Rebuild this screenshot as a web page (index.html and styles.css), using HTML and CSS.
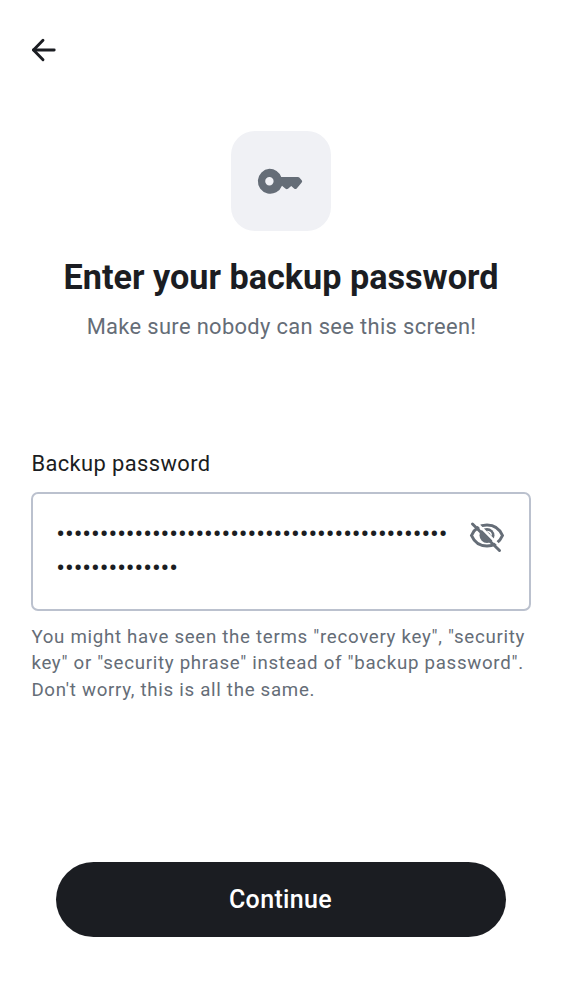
FILE: index.html
```html
<!DOCTYPE html>
<html lang="en">
<head>
<meta charset="utf-8">
<title>Enter your backup password</title>
<link rel="stylesheet" href="styles.css">
</head>
<body>
<main class="screen">
  <header class="topbar">
    <button class="back" aria-label="Back">
      <svg width="30" height="30" viewBox="0 0 30 30" fill="none" stroke="currentColor" stroke-width="2.900" stroke-linecap="round" stroke-linejoin="round"><path d="M15 5.300 5.500 15l9.500 9.700"/><path d="M5.500 15h20.700"/></svg>
    </button>
  </header>
  <section class="intro">
    <div class="tile">
      <svg width="50" height="50" viewBox="0 0 50 50" fill="currentColor"><path fill-rule="evenodd" d="M14.400 12.800a12.500 12.500 0 0 1 11.800 8.200H43q.8 0 1.300.5l2.400 2.700q1 1.100 0 2.200l-5 6q-1.300 1.300-2.600.1L36.200 30l-3.200 2.800q-1.200.9-2.400 0l-3.600-3A12.500 12.500 0 1 1 14.400 12.800m0 8.300a4.200 4.200 0 1 0 0 8.400 4.200 4.200 0 0 0 0-8.400"/></svg>
    </div>
    <h1 class="title">Enter your backup password</h1>
    <p class="subtitle">Make sure nobody can see this screen!</p>
  </section>
  <section class="field">
    <label class="label">Backup password</label>
    <div class="input">
      <div class="value">•••••••••••••••••••••••••••••••••••••••••••••<br>••••••••••••••</div>
      <button class="toggle" aria-label="Show password">
        <svg width="40" height="40" viewBox="0 0 40 40" fill="none" stroke="currentColor" stroke-width="3">
          <path d="M4.500 19.500C7.500 12.500 13 9 20 9s12.500 3.500 15.500 10.500C32.500 26.500 27 30 20 30S7.500 26.500 4.500 19.500Z"/>
          <circle cx="20" cy="19.500" r="7.500" fill="currentColor" stroke="none"/>
          <path d="M20.300 15.500a4.300 4.300 0 0 1 4 4" stroke="#fff" stroke-width="1.500"/>
          <path d="m7.500 4.800 28.500 28.500" stroke="#fff" stroke-width="2.600"/>
          <path d="m5.500 8 27 26.500" stroke-linecap="round"/>
        </svg>
      </button>
    </div>
    <p class="help">You might have seen the terms "recovery key", "security<br>key" or "security phrase" instead of "backup password".<br>Don't worry, this is all the same.</p>
  </section>
  <button class="continue">Continue</button>
</main>
</body>
</html>
```
FILE: styles.css
```css
*{box-sizing:border-box;margin:0;padding:0}
body{font-family:Roboto,sans-serif;background:#fff;color:#1b1d22}
button{border:0;background:none;font:inherit;color:inherit}
svg{display:block}
.screen{height:1000px;display:flex;flex-direction:column;padding:35px 31px 0}
.topbar{height:96px}
.back{display:block;margin-left:-3px}
.intro{display:flex;flex-direction:column;align-items:center;text-align:center;height:319px}
.tile{width:100px;height:100px;border-radius:24px;background:#f0f1f5;color:#656d77;display:grid;place-items:center}
.tile svg{margin-right:2px}
.title{font-size:34.200px;line-height:40px;font-weight:700;margin-top:26px;white-space:nowrap}
.subtitle{font-size:21.900px;line-height:30px;letter-spacing:.34px;color:#656d77;margin-top:15px;padding-left:1px}
.label{display:block;font-size:21.900px;line-height:28px;letter-spacing:.4px;padding-left:.4px}
.input{display:flex;justify-content:space-between;height:119px;margin-top:14px;padding:22px 22px 20px 23px;border:2px solid #bbc1ce;border-radius:7px}
.value{font-size:26px;line-height:34px;letter-spacing:-.08px;padding:1px 0 0 .3px;white-space:nowrap}
.toggle{height:40px;color:#656d77}
.help{font-size:18.700px;line-height:26.600px;letter-spacing:.7px;color:#656d77;margin-top:12.500px;padding-left:.4px;white-space:nowrap}
.continue{width:450px;height:75px;margin:159px auto 0;border-radius:38px;background:#1b1d22;color:#fff;font-size:25px;font-weight:500;letter-spacing:.35px;padding-right:1px}
```
